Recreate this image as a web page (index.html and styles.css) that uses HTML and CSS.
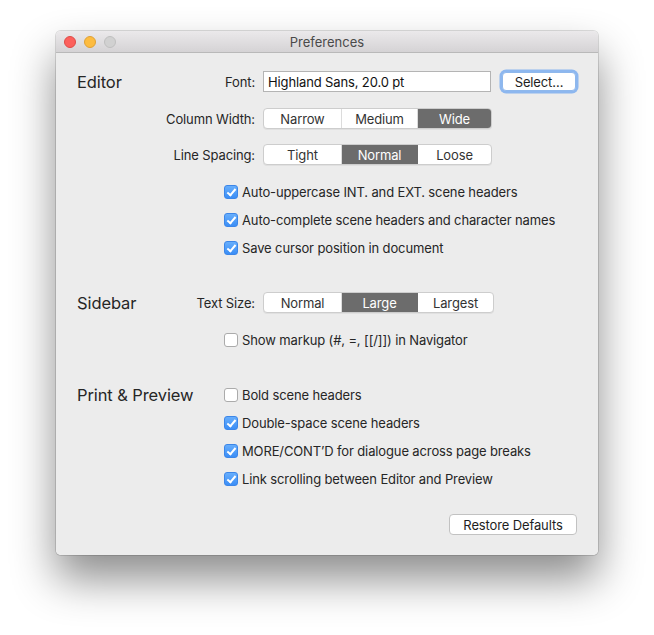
FILE: index.html
```html
<!DOCTYPE html>
<html>
<head>
<meta charset="utf-8">
<link rel="stylesheet" href="styles.css">
</head>
<body>
<div class="page">
<div class="shadow">
<div class="window">
  <div class="titlebar">
    <div class="lights">
      <span class="light red"></span>
      <span class="light yellow"></span>
      <span class="light gray"></span>
    </div>
    <div class="title">Preferences</div>
  </div>
  <div class="content">
    <div class="row r-font">
      <div class="lead"><span class="heading">Editor</span><span class="label">Font:</span></div>
      <div class="field">Highland Sans, 20.0 pt</div>
      <div class="btn focus">Select…</div>
    </div>
    <div class="row r-m16">
      <div class="lead"><span class="label">Column Width:</span></div>
      <div class="seg">
        <span class="s s1">Narrow</span><span class="s s2">Medium</span><span class="s s3 on">Wide</span>
      </div>
    </div>
    <div class="row r-m15">
      <div class="lead"><span class="label">Line Spacing:</span></div>
      <div class="seg">
        <span class="s s1">Tight</span><span class="s s2 on">Normal</span><span class="s s3">Loose</span>
      </div>
    </div>
    <div class="row check r-m17"><span class="cb on"></span><span class="ctext">Auto-uppercase INT. and EXT. scene headers</span></div>
    <div class="row check r-m8"><span class="cb on"></span><span class="ctext">Auto-complete scene headers and character names</span></div>
    <div class="row check r-m8"><span class="cb on"></span><span class="ctext">Save cursor position in document</span></div>

    <div class="row r-m34">
      <div class="lead"><span class="heading">Sidebar</span><span class="label">Text Size:</span></div>
      <div class="seg wide">
        <span class="s s1">Normal</span><span class="s s2 on">Large</span><span class="s s3">Largest</span>
      </div>
    </div>
    <div class="row check r-m17"><span class="cb"></span><span class="ctext">Show markup (#, =, [[/]]) in Navigator</span></div>

    <div class="row check r-m35"><span class="heading abs-head">Print &amp; Preview</span><span class="cb"></span><span class="ctext">Bold scene headers</span></div>
    <div class="row check r-m8"><span class="cb on"></span><span class="ctext">Double-space scene headers</span></div>
    <div class="row check r-m8"><span class="cb on"></span><span class="ctext">MORE/CONT’D for dialogue across page breaks</span></div>
    <div class="row check r-m8"><span class="cb on"></span><span class="ctext">Link scrolling between Editor and Preview</span></div>

    <div class="row foot r-m25">
      <div class="btn restore">Restore Defaults</div>
    </div>
  </div>
</div>
</div>
</div>
</body>
</html>
```

FILE: styles.css
```css
html, body {
  margin: 0;
  padding: 0;
  background: #ffffff;
}
body {
  font-family: "Inter", "Roboto", "Liberation Sans", sans-serif;
  font-size: 13px;
  letter-spacing: -0.13px;
  color: #262626;
}
.page {
  width: 654px;
  height: 635px;
  padding: 31px 0 0 56px;
  box-sizing: border-box;
  overflow: hidden;
}
.shadow {
  width: 542px;
  height: 524px;
  border-radius: 5px;
  box-shadow: 0 24px 44px rgba(0,0,0,0.45), 0 0 0 1px rgba(0,0,0,0.13);
}
.window {
  width: 542px;
  height: 524px;
  border-radius: 5px;
  background: #ececec;
  overflow: hidden;
  display: flex;
  flex-direction: column;
}
.titlebar {
  height: 21px;
  flex: none;
  background: linear-gradient(#ebe9eb, #d5d3d5);
  border-bottom: 1px solid #b9b9b9;
  position: relative;
  display: flex;
  align-items: center;
  justify-content: center;
}
.lights {
  position: absolute;
  left: 8px;
  top: 5px;
  display: flex;
  gap: 8px;
}
.light {
  width: 12px;
  height: 12px;
  border-radius: 50%;
  box-sizing: border-box;
}
.red { background: #fc605c; border: 1px solid #de4b47; }
.yellow { background: #fdbc40; border: 1px solid #dfa135; }
.gray { background: #d1d1d1; border: 1px solid #bfbfbf; }
.title {
  font-size: 13px;
  color: #4a4a4a;
  letter-spacing: 0;
}
.content {
  flex: 1;
  padding: 18px 21px 0 0;
  display: flex;
  flex-direction: column;
}
.row {
  display: flex;
  align-items: center;
  height: 21px;
  flex: none;
}
.r-m8 { margin-top: 8px; }
.r-m15 { margin-top: 15px; }
.r-m16 { margin-top: 16px; }
.r-m17 { margin-top: 17px; }
.r-m25 { margin-top: 25px; }
.r-m34 { margin-top: 34px; }
.r-m35 { margin-top: 35px; }
.lead {
  width: 178px;
  padding-left: 21px;
  margin-right: 8px;
  display: flex;
  justify-content: space-between;
  align-items: center;
  flex: none;
}
.heading {
  font-size: 16.5px;
  letter-spacing: -0.1px;
  color: #262626;
}
.label {
  margin-left: auto;
}
.field {
  width: 228px;
  height: 21px;
  box-sizing: border-box;
  background: #fff;
  border: 1px solid #b4b4b4;
  padding: 0 4px;
  display: flex;
  align-items: center;
  color: #111;
}
.btn {
  box-sizing: border-box;
  background: #fff;
  border-radius: 4px;
  border: 1px solid #c2c2c2;
  display: flex;
  align-items: center;
  justify-content: center;
  color: #1e1e1e;
}
.focus {
  margin-left: 11px;
  width: 74px;
  height: 19px;
  border: 1px solid #8fb8ec;
  box-shadow: 0 0 0 2.5px rgba(110,165,240,0.75);
}
.seg {
  display: flex;
  width: 229px;
  height: 21px;
  box-sizing: border-box;
  border: 1px solid #cdcdcd;
  border-radius: 4px;
  background: #fff;
  overflow: hidden;
  box-shadow: 0 1px 0 rgba(0,0,0,0.05);
}
.seg.wide { width: 231px; }
.s {
  display: flex;
  align-items: center;
  justify-content: center;
  color: #333;
}
.s1 { width: 78px; border-right: 1px solid #dcdcdc; box-sizing: border-box; }
.s2 { width: 76px; border-right: 1px solid #dcdcdc; box-sizing: border-box; }
.s3 { flex: 1; }
.s.on {
  background: #6c6c6c;
  color: #fff;
  border-right-color: #6c6c6c;
}
.check {
  height: 20px;
  padding-left: 168px;
  position: relative;
}
.abs-head {
  position: absolute;
  left: 21px;
  top: 0;
}
.cb {
  width: 14px;
  height: 14px;
  box-sizing: border-box;
  border-radius: 3px;
  background: #fff;
  border: 1px solid #ababab;
  margin-right: 4px;
  flex: none;
  position: relative;
}
.cb.on {
  background: linear-gradient(#67aefc, #3b8ef6);
  border: 1px solid #3c86e8;
}
.cb.on::after {
  content: "";
  position: absolute;
  left: 4px;
  top: 1px;
  width: 3px;
  height: 7px;
  border: solid #fff;
  border-width: 0 2px 2px 0;
  transform: rotate(40deg);
}
.ctext { white-space: nowrap; }
.foot {
  justify-content: flex-end;
}
.restore {
  width: 128px;
  height: 21px;
}
```
